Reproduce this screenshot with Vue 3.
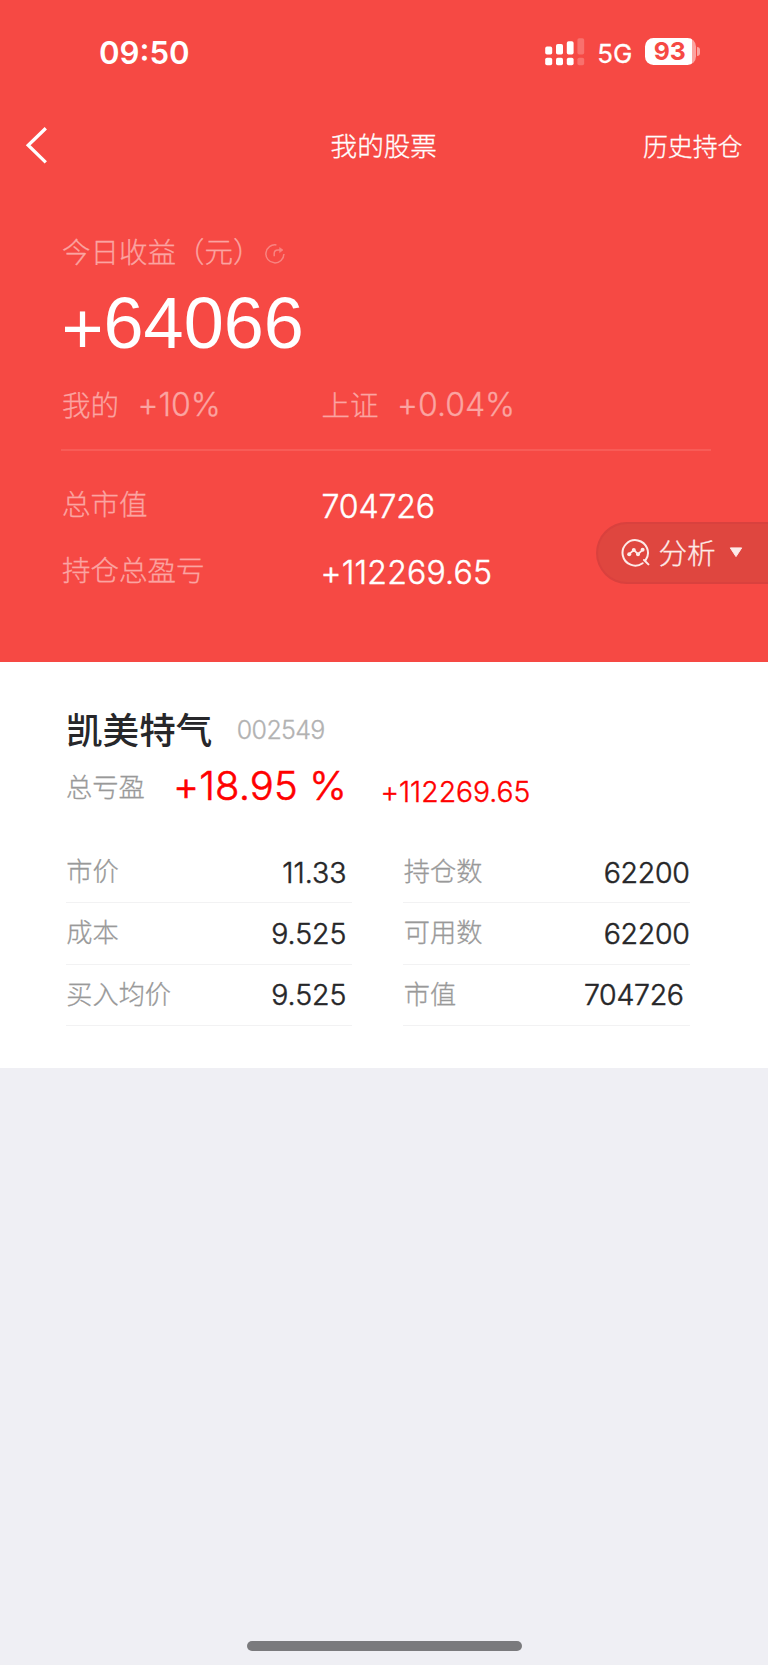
<script setup>
const columns = [
  [
    { label: '市价', value: '11.33', cls: 'v-price' },
    { label: '成本', value: '9.525', cls: 'v-cost' },
    { label: '买入均价', value: '9.525', cls: 'v-cost' }
  ],
  [
    { label: '持仓数', value: '62200', cls: 'v-count' },
    { label: '可用数', value: '62200', cls: 'v-count' },
    { label: '市值', value: '704726', cls: 'v-total' }
  ]
]
</script>

<template>
  <div class="screen">
    <section class="hero">
      <div class="status">
        <span class="time">09:50</span>
        <div class="status-right">
          <svg class="signal" width="40" height="28" viewBox="0 0 40 28" fill="#fff">
            <rect x="0.2" y="8.6" width="7" height="8" rx="1.8" />
            <rect x="11" y="6" width="7" height="10.6" rx="1.8" />
            <rect x="21.8" y="3.2" width="6.8" height="13.4" rx="1.8" />
            <rect x="32.4" y="0.2" width="6.8" height="16.4" rx="1.8" opacity=".22" />
            <rect x="0.2" y="19.8" width="7" height="7.4" rx="1.8" />
            <rect x="11" y="19.8" width="7" height="7.4" rx="1.8" />
            <rect x="21.8" y="19.8" width="6.8" height="7.4" rx="1.8" />
            <rect x="32.4" y="19.8" width="6.8" height="7.4" rx="1.8" opacity=".22" />
          </svg>
          <span class="net">5G</span>
          <span class="battery"><span class="level">93</span><i class="nub"></i></span>
        </div>
      </div>

      <nav class="nav">
        <svg class="back" width="24" height="38" viewBox="0 0 24 38" fill="none" stroke="#fff" stroke-width="3.3">
          <path d="M20.8 2.2 L3.2 19.3 L20.8 36.4" />
        </svg>
        <h1 class="title">我的股票</h1>
        <span class="history">历史持仓</span>
      </nav>

      <div class="summary">
        <div class="row caption">
          <span>今日收益（元）</span>
          <svg class="refresh" width="22" height="22" viewBox="0 0 22 22" fill="none" stroke="#fff" stroke-width="1.5">
            <path d="M12.4 2 A9 9 0 1 0 19.9 11" />
            <path d="M10.2 13.2 V10.6 Q10.2 7 14 7 H17.4" />
            <path d="M15.6 4.6 L19 7 L15.6 9.6 Z" fill="#fff" stroke-width=".6" />
          </svg>
        </div>
        <div class="profit"><span class="plus">+</span>64066</div>
        <div class="row rates">
          <div class="cell"><span>我的</span><span class="num pct">+10%</span></div>
          <div><span>上证</span><span class="num pct">+0.04%</span></div>
        </div>
        <div class="divider"></div>
        <div class="row total">
          <span class="cell dim">总市值</span><span class="num amount">704726</span>
        </div>
        <div class="row gain">
          <span class="cell dim">持仓总盈亏</span><span class="num amount wide">+112269.65</span>
        </div>
      </div>

      <div class="analysis">
        <svg width="30" height="30" viewBox="0 0 30 30" fill="none" stroke="#fdeae8" stroke-width="2">
          <path d="M21.6 25.2 A12.7 12.7 0 1 1 24.6 22.2 M23 22 L27.4 26.4" stroke-linecap="round" />
          <path d="M8.2 16.2 L12.8 12 L17 16.2 L21.6 11.8" stroke-width="1.7" />
          <g fill="#fdeae8" stroke="none">
            <circle cx="8.2" cy="16.2" r="2" /><circle cx="12.8" cy="12" r="2" />
            <circle cx="17" cy="16.2" r="2" /><circle cx="21.6" cy="11.8" r="2" />
          </g>
        </svg>
        <span class="analysis-label">分析</span>
        <svg class="caret" width="14" height="11" viewBox="0 0 14 11">
          <path d="M1.3 0.9 H12.7 L7 9.6 Z" fill="#fdeae8" stroke="#fdeae8" stroke-width="1" stroke-linejoin="round" />
        </svg>
      </div>
    </section>

    <section class="stock">
      <div class="stock-head">
        <h2 class="name">凯美特气</h2><span class="code">002549</span>
      </div>
      <div class="stock-gain">
        <span class="gain-label">总亏盈</span>
        <span class="gain-pct">+18.95 %</span>
        <span class="gain-sum">+112269.65</span>
      </div>
      <div class="table">
        <div v-for="(col, i) in columns" :key="i" class="col">
          <div v-for="item in col" :key="item.label" class="line">
            <span class="key">{{ item.label }}</span>
            <span class="val" :class="item.cls">{{ item.value }}</span>
          </div>
        </div>
      </div>
    </section>

    <footer class="foot"><div class="home-bar"></div></footer>
  </div>
</template>

<style>
body {
  background: #efeff4;
}
</style>

<style scoped>
* {
  box-sizing: border-box;
}
.screen {
  width: 768px;
  height: 1665px;
  display: flex;
  flex-direction: column;
  background: #efeff4;
  font-family: Inter, "Noto Sans CJK SC", sans-serif;
  font-weight: 300;
  -webkit-text-stroke-width: 0.3px;
  white-space: nowrap;
  overflow: hidden;
}
.hero {
  position: relative;
  height: 661.5px;
  background: #f64944;
  color: #fff;
}
.status {
  height: 105px;
  padding: 0 68px 0 99px;
  display: flex;
  justify-content: space-between;
  align-items: center;
  -webkit-text-stroke-width: 0;
}
.time {
  font-size: 31.2px;
  font-weight: 600;
}
.status-right {
  display: flex;
  align-items: center;
}
.signal {
  margin-top: -1.5px;
}
.net {
  margin-left: 12.5px;
  width: 47.5px;
  padding-top: 1px;
  font-size: 25.9px;
  font-weight: 400;
  -webkit-text-stroke-width: 0.3px;
}
.battery {
  display: flex;
  align-items: center;
  gap: 1px;
  margin-top: -1.4px;
}
.level {
  width: 51.3px;
  height: 27px;
  border-radius: 8.5px;
  background: linear-gradient(90deg, #fff 47px, #fba4a1 47px);
  color: #f64944;
  font-size: 24.8px;
  font-weight: 700;
  line-height: 27px;
  padding-left: 9px;
}
.nub {
  width: 3px;
  height: 9px;
  border-radius: 0 4px 4px 0;
  background: #fba4a1;
}
.nav {
  height: 79px;
  padding: 0 25.5px 0 25px;
  display: grid;
  grid-template-columns: 1fr auto 1fr;
  align-items: center;
}
.title {
  margin: 0;
  font-size: 26.6px;
  font-weight: 300;
}
.history {
  justify-self: end;
  font-size: 24.9px;
}
.summary {
  padding: 49px 57px 0 62px;
  font-size: 28.5px;
}
.row {
  display: flex;
  align-items: center;
  height: 40px;
  line-height: 40px;
}
.caption,
.rates,
.dim {
  color: #fba4a1;
}
.refresh {
  margin: 1px 0 0 2px;
  opacity: 0.32;
}
.profit {
  height: 90px;
  line-height: 90px;
  margin: 5px 0 0 -0.5px;
  font-family: "Liberation Sans", Arial, sans-serif;
  font-size: 72px;
  font-weight: 400;
  -webkit-text-stroke-width: 0;
}
.plus {
  position: relative;
  top: 5px;
}
.rates {
  margin-top: 17.5px;
}
.cell {
  width: 259.6px;
}
.num {
  font-size: 32px;
  font-feature-settings: "calt" 0;
}
.pct {
  margin-left: 18.5px;
}
.divider {
  height: 2px;
  margin: 23.5px 0 0 -1px;
  background: #f85c57;
}
.total {
  margin-top: 33.5px;
}
.gain {
  margin-top: 26px;
}
.amount {
  padding-top: 4px;
  -webkit-text-stroke-width: 0.45px;
  letter-spacing: -0.15px;
}
.wide {
  letter-spacing: 0.2px;
  margin-left: -1px;
}
.analysis {
  position: absolute;
  left: 596px;
  right: 0;
  top: 522px;
  height: 62px;
  display: flex;
  align-items: center;
  padding-left: 22.5px;
  border: 2px solid #d9413e;
  border-right: 0;
  border-radius: 31px 0 0 31px;
  background: #df463f;
  color: #fdeae8;
}
.analysis-label {
  margin: -3px 0 0 8px;
  font-size: 28.6px;
}
.caret {
  margin: -2px 0 0 13px;
}
.stock {
  height: 406.5px;
  padding: 43px 78px 0 66px;
  background: #fff;
}
.stock-head {
  display: flex;
  align-items: center;
  height: 49px;
}
.name {
  margin: -1px 0 0;
  font-size: 36.6px;
  font-weight: 500;
  color: #27272a;
  -webkit-text-stroke-width: 0;
}
.code {
  margin-left: 24.5px;
  padding-top: 2px;
  font-size: 25px;
  letter-spacing: -0.65px;
  color: #b2b2b2;
}
.stock-gain {
  display: flex;
  align-items: center;
  height: 63px;
  color: #f00;
  font-feature-settings: "calt" 0;
}
.gain-label {
  width: 107px;
  font-size: 26.3px;
  color: #999;
}
.gain-pct {
  width: 207.5px;
  font-size: 40px;
  letter-spacing: 0.1px;
  -webkit-text-stroke-width: 0.6px;
}
.gain-sum {
  padding-top: 13px;
  font-size: 28.3px;
  letter-spacing: 0;
  -webkit-text-stroke-width: 0.4px;
}
.table {
  display: grid;
  grid-template-columns: 286.5px 286.5px;
  column-gap: 51px;
  margin-top: 25.5px;
  margin-left: -0.5px;
}
.line {
  display: flex;
  align-items: center;
  justify-content: space-between;
  height: 61.3px;
  border-bottom: 1.5px solid #f2f2f3;
}
.key {
  padding: 0 0 4px 0.8px;
  font-size: 26.2px;
  color: #999;
}
.val {
  font-size: 28.5px;
  -webkit-text-stroke-width: 0.5px;
  color: #262628;
}
.v-price,
.v-cost {
  padding-right: 5.5px;
}
.v-count {
  letter-spacing: -0.3px;
}
.v-total {
  padding-right: 5.8px;
  letter-spacing: -0.3px;
}
.foot {
  flex: 1;
  display: flex;
  justify-content: center;
  align-items: flex-end;
  padding-bottom: 14.5px;
}
.home-bar {
  width: 275px;
  height: 9.5px;
  border-radius: 5px;
  background: #7a7a7d;
}
</style>
